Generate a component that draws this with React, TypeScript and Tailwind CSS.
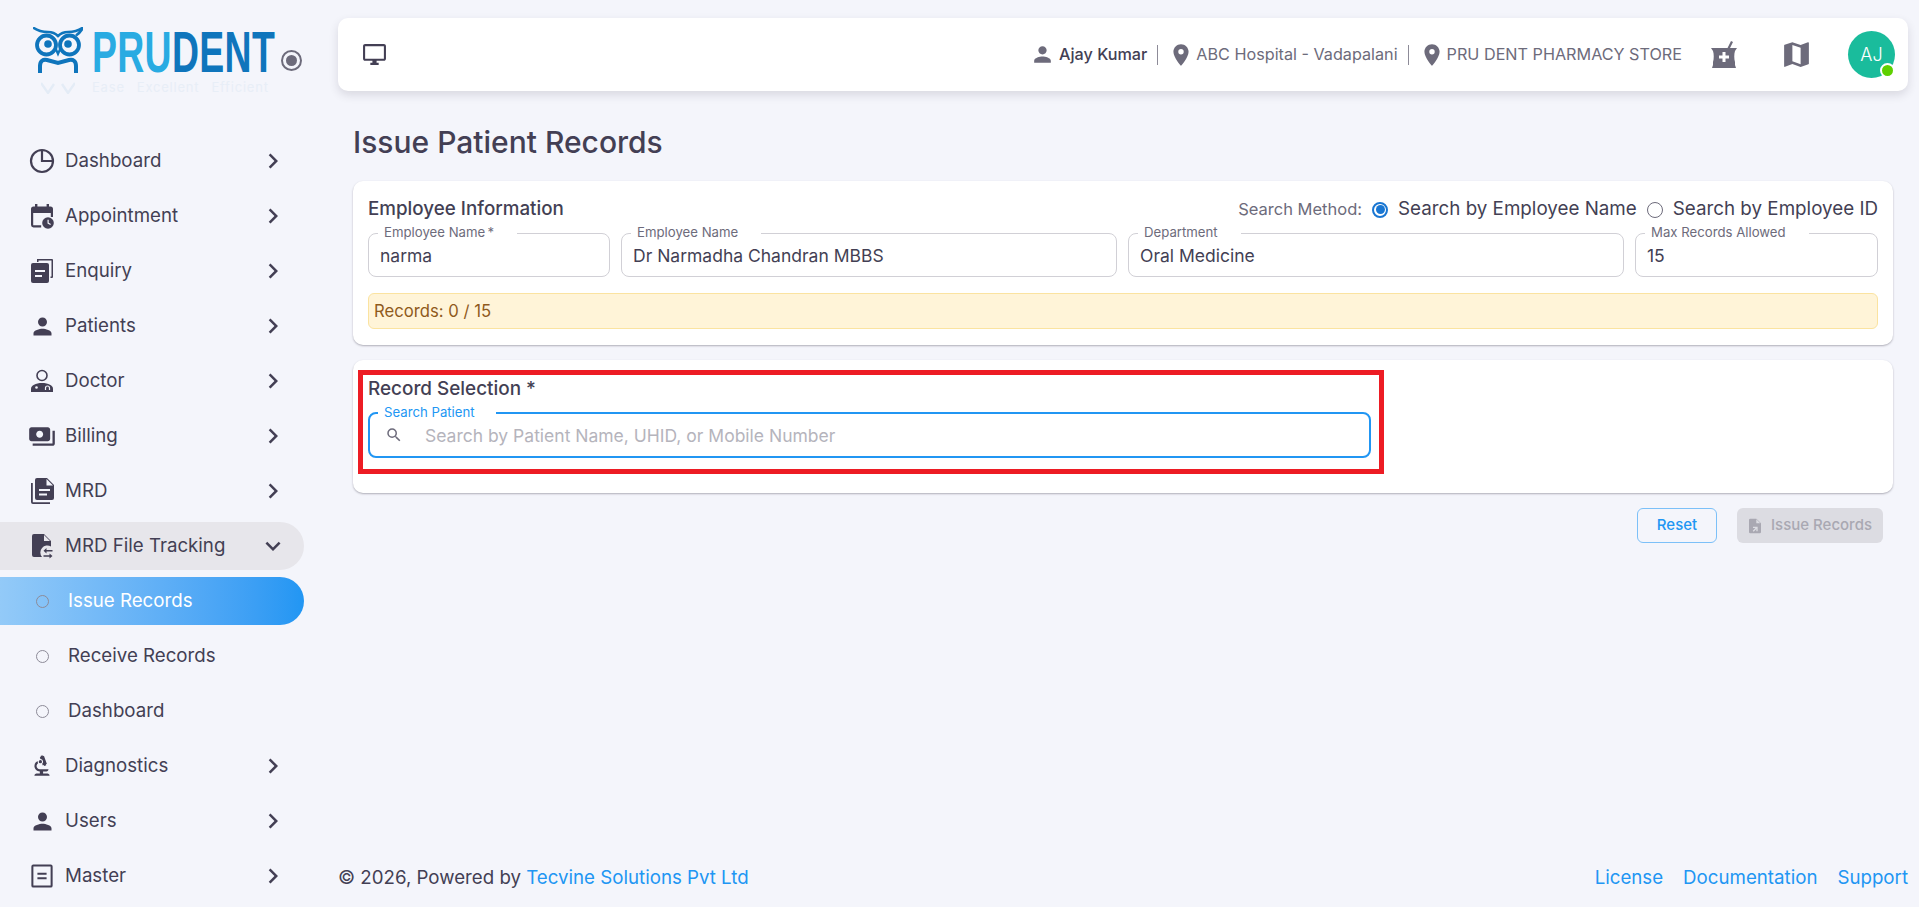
import React from "react";
import {
  MdPerson,
  MdPlace,
  MdSearch,
  MdMap,
  MdKeyboardArrowRight,
  MdKeyboardArrowDown,
  MdOutlineDesktopWindows,
  MdPayments,
  MdBiotech,
} from "react-icons/md";

const font = { fontFamily: "Inter, 'Noto Sans', sans-serif" };

const PieIcon = () => (
  <svg viewBox="0 0 26 26" className="w-[26px] h-[26px]" fill="none" stroke="currentColor" strokeWidth="2.2">
    <circle cx="13" cy="13" r="11" />
    <path d="M13 2v11h11" />
  </svg>
);

const CalendarIcon = () => (
  <svg viewBox="0 0 24 26" className="w-[24px] h-[26px]" fill="currentColor">
    <path d="M5 1h2.4v2.5h9.2V1H19v2.5h1.5A2.5 2.5 0 0 1 23 6v8h-2.2V10H3.2v12.2h8V24.400H3.500A2.500 2.500 0 0 1 1 22V6a2.500 2.500 0 0 1 2.500-2.500H5z" />
    <circle cx="18" cy="20" r="5.800" />
    <path d="M17.500 16.800h1.200v3l2.200 1.300-.6 1-2.800-1.700z" fill="#f4f5fb" />
  </svg>
);

const EnquiryIcon = () => (
  <svg viewBox="0 0 24 26" className="w-[24px] h-[26px]" fill="currentColor">
    <path d="M7 1h15a1 1 0 0 1 1 1v17a1 1 0 0 1-1 1h-1.500v-1.500h1V2.500H8.500V4H7z" />
    <path d="M3 5h14a2 2 0 0 1 2 2v16a2 2 0 0 1-2 2H3a2 2 0 0 1-2-2V7a2 2 0 0 1 2-2z" />
    <path d="M5 12h10v2H5zM5 17h7v2H5z" fill="#f4f5fb" />
  </svg>
);

const DoctorIcon = () => (
  <svg viewBox="0 0 24 24" className="w-[24px] h-[24px]" fill="currentColor">
    <circle cx="12" cy="6.500" r="5" fill="none" stroke="currentColor" strokeWidth="1.600" />
    <path d="M1 23v-3.500c0-3 4.500-5.500 11-5.500s11 2.500 11 5.500V23z" />
    <circle cx="6.500" cy="18.500" r="1.300" fill="#f4f5fb" />
    <path d="M15.500 21v-2a2 2 0 0 1 4 0v2" fill="none" stroke="#f4f5fb" strokeWidth="1.200" />
  </svg>
);

const MrdIcon = () => (
  <svg viewBox="0 0 24 28" className="w-[24px] h-[28px]" fill="currentColor">
    <path d="M7 1h10l7 7v13a2 2 0 0 1-2 2H7a2 2 0 0 1-2-2V3a2 2 0 0 1 2-2z" />
    <path d="M16.500 2v6.500H23z" fill="#f4f5fb" />
    <path d="M9 12h11v2H9zM9 16.500h8v2H9z" fill="#f4f5fb" />
    <path d="M1 6h1.800v19.200H20V27H3a2 2 0 0 1-2-2z" />
  </svg>
);

const FileSwapIcon = () => (
  <svg viewBox="0 0 24 26" className="w-[24px] h-[26px]" fill="currentColor">
    <path d="M4 1h10l7 7v5.500a7 7 0 0 0-9 10.500H4a2 2 0 0 1-2-2V3a2 2 0 0 1 2-2z" />
    <path d="M14 2v6h6z" fill="#e7e6eb" />
    <path d="M16.500 15l-3 2.700 3 2.700v-1.900h6v-1.600h-6zM19.500 20.500l3 2.500-3 2.500v-1.700h-6v-1.600h6z" />
  </svg>
);

const MasterIcon = () => (
  <svg viewBox="0 0 24 26" className="w-[22px] h-[24px]" fill="none" stroke="currentColor" strokeWidth="2.200">
    <rect x="1.500" y="1.500" width="21" height="23" rx="1" />
    <path d="M7 10.500h10M7 15.500h10" />
  </svg>
);

// mortar with pestle and a plus on it
const MortarIcon = () => (
  <svg viewBox="0 0 26 27" className="w-[26px] h-[27px]" fill="#6d6b7b">
    <path d="M0 7h16.500L20 0l2 1-3 6h7l-2 3c-1 3-1 8 0 11v3l1 3H1l1-3v-3c1-3 1-8 0-11z" />
    <path d="M11.500 11h3v3.500H18v3h-3.500V21h-3v-3.500H8v-3h3.500z" fill="#fff" />
  </svg>
);

const FileArrowIcon = () => (
  <svg viewBox="0 0 20 24" className="w-[14px] h-[16px]" fill="currentColor">
    <path d="M3 1h9l7 7v13a2 2 0 0 1-2 2H3a2 2 0 0 1-2-2V3a2 2 0 0 1 2-2z" />
    <path d="M12 2v6h6z" fill="#dcdce2" />
    <path d="M7 13h7v7h-2v-3.500L8 20.500 6.600 19l4-4H7z" fill="#dcdce2" />
  </svg>
);

const OwlLogo = () => (
  <svg viewBox="0 0 50 46" className="w-[50px] h-[46px] shrink-0" fill="none" stroke="#0f75bc" strokeWidth="3.800">
    <path d="M0 .5c4 3 9 4.500 15 4.500 4 0 7 1 10 4 3-3 6-4 10-4 6 0 11-1.500 15-4.500-2 4-4 6-7 8" strokeWidth="2.600" />
    <circle cx="13.500" cy="18" r="9.500" />
    <circle cx="36.500" cy="18" r="9.500" />
    <circle cx="15" cy="17" r="3.800" fill="#0f75bc" stroke="none" />
    <circle cx="35" cy="17" r="3.800" fill="#0f75bc" stroke="none" />
    <path d="M22 20l3 7 3-7" strokeWidth="2.200" />
    <path d="M7 46v-7c0-5 3-7 7-6l11 3 11-3c4-1 7 1 7 6v7" strokeWidth="4" />
  </svg>
);

const Logo = () => (
  <div className="h-[137px] relative pl-[33px] pt-[27px]" style={font}>
    <div className="flex items-start gap-[9px]">
      <OwlLogo />
      <div className="w-[181px] h-[46px] relative">
        <span
          className="block origin-top-left scale-x-[0.645] text-[58px] leading-[50px] font-bold whitespace-nowrap tracking-[0.5px]"
          style={{ fontFamily: "'Liberation Sans', sans-serif" }}
        >
          <span className="text-[#29abe2]">PRU</span>
          <span className="text-[#0f75bc]">DENT</span>
        </span>
      </div>
    </div>
    <div className="flex items-center mt-[5px]">
      <svg viewBox="0 0 34 12" className="w-[34px] h-[12px] ml-[8px]" fill="none" stroke="#e4ecf6" strokeWidth="2.400">
        <path d="M0 1l7 10 6-9M21 2l6 9 7-10" />
      </svg>
      <span className="ml-[17px] flex gap-[12px] text-[#e8eef7] text-[13px] tracking-[0.8px] whitespace-nowrap">
        <span>Ease</span>
        <span>Excellent</span>
        <span>Efficient</span>
      </span>
    </div>
    <div className="absolute left-[281px] top-[50px] w-[21px] h-[21px] rounded-full border-2 border-[#6d6b7b] flex items-center justify-center">
      <div className="w-[11px] h-[11px] rounded-full bg-[#6d6b7b]" />
    </div>
  </div>
);

const navTop = [
  { label: "Dashboard", icon: <PieIcon /> },
  { label: "Appointment", icon: <CalendarIcon /> },
  { label: "Enquiry", icon: <EnquiryIcon /> },
  { label: "Patients", icon: <MdPerson size={27} /> },
  { label: "Doctor", icon: <DoctorIcon /> },
  { label: "Billing", icon: <MdPayments size={29} /> },
  { label: "MRD", icon: <MrdIcon /> },
];

const navBottom = [
  { label: "Diagnostics", icon: <MdBiotech size={26} /> },
  { label: "Users", icon: <MdPerson size={27} /> },
  { label: "Master", icon: <MasterIcon /> },
];

const NavItem = ({ label, icon }: { label: string; icon: React.ReactNode }) => (
  <div className="h-[48px] w-[304px] flex items-center text-[#433f54] shrink-0">
    <div className="w-[28px] ml-[28px] flex justify-center">{icon}</div>
    <span className="ml-[9px] flex-1 text-[18.7px]">{label}</span>
    <MdKeyboardArrowRight size={30} className="mr-[16px]" />
  </div>
);

const SubItem = ({ label, active }: { label: string; active?: boolean }) => (
  <div
    className={
      active
        ? "h-[48px] w-[304px] flex items-center rounded-r-full bg-gradient-to-r from-[#93caf8] to-[#2196f3] text-white shrink-0"
        : "h-[48px] w-[304px] flex items-center text-[#433f54] shrink-0"
    }
  >
    <div className="ml-[36px] w-[13px] h-[13px] rounded-full border-[1.5px] border-[#8d8b98]" />
    <span className="ml-[19px] text-[18.7px]">{label}</span>
  </div>
);

const Sidebar = () => (
  <aside className="w-[338px] shrink-0 h-full">
    <Logo />
    <nav className="flex flex-col gap-[7px]">
      {navTop.map((n) => (
        <NavItem key={n.label} label={n.label} icon={n.icon} />
      ))}
      <div className="h-[48px] w-[304px] flex items-center text-[#433f54] bg-[#e7e6eb] rounded-r-full shrink-0">
        <div className="w-[28px] ml-[28px] flex justify-center">
          <FileSwapIcon />
        </div>
        <span className="ml-[9px] flex-1 text-[18.7px]">MRD File Tracking</span>
        <MdKeyboardArrowDown size={30} className="mr-[16px]" />
      </div>
      <SubItem label="Issue Records" active />
      <SubItem label="Receive Records" />
      <SubItem label="Dashboard" />
      {navBottom.map((n) => (
        <NavItem key={n.label} label={n.label} icon={n.icon} />
      ))}
    </nav>
  </aside>
);

const Field = ({ label, value, required }: { label: string; value: string; required?: boolean }) => (
  <div className="relative h-[44px] rounded-lg border border-[#d1d0d6] flex items-center px-[11px] pt-[3px] text-[17.5px] text-[#433f54]">
    <span className="absolute left-[9px] -top-[10px] bg-white pl-[6px] pr-[23px] text-[13.2px] leading-[16px] text-[#6d6b7b] whitespace-nowrap">
      {label}
      {required && "\u2009*"}
    </span>
    {value}
  </div>
);

const Radio = ({ checked, label }: { checked?: boolean; label: string }) => (
  <span className="flex items-center gap-[10px] text-[18.8px] text-[#433f54]">
    <span
      className={
        checked
          ? "w-[16px] h-[16px] rounded-full border-2 border-[#1976d2] flex items-center justify-center"
          : "w-[16px] h-[16px] rounded-full border border-[#6d6b7b]"
      }
    >
      {checked && <span className="w-[9px] h-[9px] rounded-full bg-[#1976d2]" />}
    </span>
    {label}
  </span>
);

const Header = () => (
  <header className="h-[73px] bg-white rounded-[10px] shadow-[0_4px_10px_rgba(47,43,61,0.14)] flex items-center pl-[24px] pr-[13px] shrink-0">
    <MdOutlineDesktopWindows size={25} className="text-[#433f54]" />
    <div className="ml-auto flex items-center text-[16.2px] text-[#6d6b7b]">
      <MdPerson size={25} className="text-[#6d6b7b]" />
      <span className="ml-[4px] text-[#433f54] font-medium">Ajay Kumar</span>
      <span className="mx-[10px] w-px h-[20px] bg-[#8d8b98]" />
      <MdPlace size={26} />
      <span className="ml-[2px]">ABC Hospital - Vadapalani</span>
      <span className="mx-[10px] w-px h-[20px] bg-[#8d8b98]" />
      <MdPlace size={26} />
      <span className="ml-[2px]">PRU DENT PHARMACY STORE</span>
      <span className="ml-[29px]">
        <MortarIcon />
      </span>
      <MdMap size={33} className="ml-[43px]" />
      <div className="relative ml-[35px] w-[47px] h-[47px] rounded-full bg-[#1abc9c] text-white flex items-center justify-center text-[18px] font-light">
        AJ
        <span className="absolute right-0 bottom-0 w-[15px] h-[15px] rounded-full bg-[#5fd000] border-2 border-white" />
      </div>
    </div>
  </header>
);

const EmployeeCard = () => (
  <section className="bg-white rounded-[10px] shadow-[0_1px_2px_rgba(47,43,61,0.35)] px-[15px] pt-[15px] h-[164px]">
    <div className="flex items-center justify-between h-[27px]">
      <h2 className="text-[18.8px] font-medium text-[#433f54]">Employee Information</h2>
      <div className="flex items-center gap-[10px]">
        <span className="text-[16.5px] text-[#6d6b7b]">Search Method:</span>
        <Radio checked label="Search by Employee Name" />
        <Radio label="Search by Employee ID" />
      </div>
    </div>
    <div className="grid grid-cols-[242px_496px_496px_1fr] gap-[11px] mt-[10px]">
      <Field label="Employee Name" required value="narma" />
      <Field label="Employee Name" value="Dr Narmadha Chandran MBBS" />
      <Field label="Department" value="Oral Medicine" />
      <Field label="Max Records Allowed" value="15" />
    </div>
    <div className="mt-[16px] h-[36px] rounded-md border border-[#fbe3a0] bg-[#fff4d8] flex items-center px-[5px] pt-[2px] text-[16.7px] text-[#8f5a1c]">
      Records: 0 / 15
    </div>
  </section>
);

const RecordCard = () => (
  <section className="relative bg-white rounded-[10px] shadow-[0_1px_2px_rgba(47,43,61,0.35)] px-[15px] pt-[15px] h-[133px] mt-[15px]">
    <h2 className="text-[18.9px] font-medium text-[#433f54] leading-[28px]">Record Selection *</h2>
    <div className="relative w-[1003px] h-[46px] rounded-lg border-2 border-[#2196f3] flex items-center mt-[9px]">
      <span className="absolute left-[8px] -top-[10px] bg-white pl-[6px] pr-[21px] text-[13.2px] leading-[16px] text-[#2196f3]">
        Search Patient
      </span>
      <MdSearch size={18} className="ml-[15px] text-[#6d6b7b]" />
      <span className="ml-[22px] pt-[2px] text-[17.5px] text-[#b5b4bc]">Search by Patient Name, UHID, or Mobile Number</span>
    </div>
    <div className="absolute left-[5px] top-[10px] w-[1026px] h-[104px] border-[5px] border-[#ed1c24] pointer-events-none" />
  </section>
);

const Footer = () => (
  <footer className="mt-auto flex items-center justify-between pb-[15px] text-[18.7px] text-[#433f54]">
    <span>
      © 2026, Powered by <span className="text-[#2196f3]">Tecvine Solutions Pvt Ltd</span>
    </span>
    <span className="flex gap-[20px] text-[#2196f3]">
      <span>License</span>
      <span>Documentation</span>
      <span>Support</span>
    </span>
  </footer>
);

const App = () => {
  return (
    <div className="flex h-[907px] w-[1919px] overflow-hidden bg-[#f4f5fb]" style={font}>
      <Sidebar />
      <main className="flex-1 flex flex-col pt-[18px] pr-[11px] min-w-0">
        <Header />
        <div className="px-[15px]">
          <h1 className="text-[30px] leading-[36px] font-medium text-[#433f54] mt-[33px] mb-[21px]">Issue Patient Records</h1>
          <EmployeeCard />
          <RecordCard />
          <div className="flex justify-end gap-[20px] mt-[15px] pr-[10px]">
            <button className="w-[80px] h-[35px] rounded-md border border-[#7cc0f8] text-[#2196f3] text-[15px] font-medium">
              Reset
            </button>
            <button className="w-[146px] h-[35px] rounded-md bg-[#dcdce2] text-[#a9a8b2] text-[15px] font-medium flex items-center justify-center gap-[9px]">
              <FileArrowIcon />
              Issue Records
            </button>
          </div>
        </div>
        <Footer />
      </main>
    </div>
  );
};

export default App;
